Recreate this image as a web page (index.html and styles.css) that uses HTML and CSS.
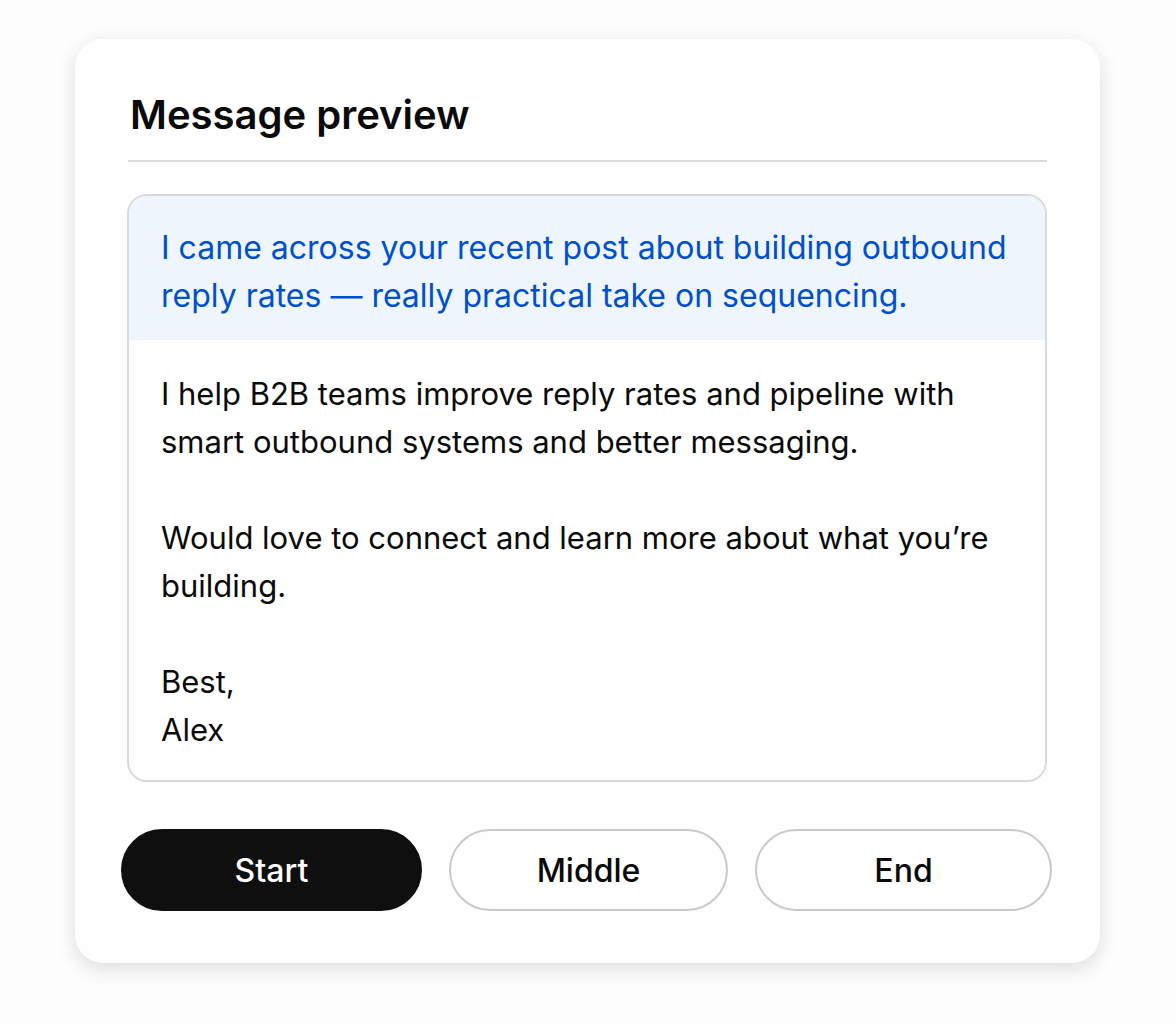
FILE: index.html
```html
<!DOCTYPE html>
<html lang="en">
<head>
  <meta charset="UTF-8">
  <title>Message preview</title>
  <meta name="viewport" content="width=device-width, initial-scale=1.0">
  <link rel="stylesheet" href="styles.css">
</head>
<body>

  <main class="card">
    <h1>Message preview</h1>

    <div class="message">
      <p class="highlight">I came across your recent post about building outbound reply rates — really practical take on sequencing.</p>
      <div class="message-body">
        <p>I help B2B teams improve reply rates and pipeline with smart outbound systems and better messaging.</p>
        <p>Would love to connect and learn more about what you’re building.</p>
        <p>Best,<br>Alex</p>
      </div>
    </div>

    <div class="positions">
      <button type="button" class="position start active">Start</button>
      <button type="button" class="position middle">Middle</button>
      <button type="button" class="position end">End</button>
    </div>
  </main>

</body>
</html>
```
FILE: styles.css
```css
* { margin: 0; padding: 0; box-sizing: border-box; }
body {
  background: #fdfdfd;
  color: #0a0a0a;
  font-family: Inter, "Liberation Sans", sans-serif;
  padding: 39px 76px 61px 75px;
}
.card {
  background: #fefefe;
  border-radius: 28px;
  padding: 48px 48px 52px 46px;
  box-shadow: 0 6px 20px rgba(0, 0, 0, 0.13);
}
h1 {
  margin: 0 5px 0 7px;
  padding: 0 2px 17px;
  border-bottom: 2px solid #dcdcdc;
  font-size: 40px;
  line-height: 56px;
  font-weight: 600;
}
.message {
  margin: 32px 5px 0 6px;
  border: 2px solid #d9dadc;
  border-radius: 20px;
  overflow: hidden;
  font-size: 32px;
  line-height: 48px;
}
.highlight {
  background: #eff5fd;
  color: #0050cc;
  padding: 28px 32px 20px;
}
.message-body {
  display: flex;
  flex-direction: column;
  gap: 48px;
  padding: 30px 32px 26px;
  font-size: 31px;
}
.positions {
  display: flex;
  gap: 27px;
  margin-top: 47px;
}
.position {
  height: 82px;
  background: #fefefe;
  color: #0a0a0a;
  border: 2px solid #cacaca;
  border-radius: 41px;
  font: inherit;
  font-size: 32px;
  font-weight: 500;
  cursor: pointer;
}
.start {
  flex: 301;
}
.middle {
  flex: 279;
}
.end {
  flex: 297;
}
.active {
  background: #0f0f0f;
  border-color: #0f0f0f;
  color: white;
}
```
